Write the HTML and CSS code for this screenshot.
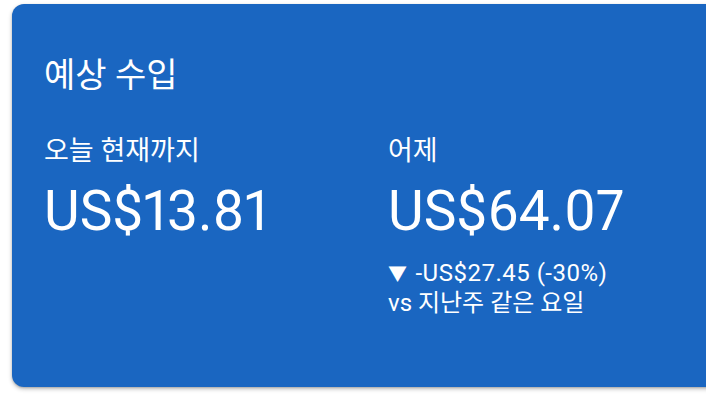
FILE: index.html
```html
<!DOCTYPE html>
<html lang="ko">
<head>
<meta charset="utf-8">
<link rel="stylesheet" href="styles.css">
</head>
<body>
<div class="card">
  <h1 class="title">예상 수입</h1>
  <div class="cols">
    <div class="col">
      <div class="label">오늘 현재까지</div>
      <div class="amount">US$13.81</div>
    </div>
    <div class="col">
      <div class="label">어제</div>
      <div class="amount">US$64.07</div>
      <div class="delta change"><span class="arrow">▼</span> -US$27.45 (-30%)</div>
      <div class="delta">vs 지난주 같은 요일</div>
    </div>
  </div>
</div>
</body>
</html>
```
FILE: styles.css
```css
html, body {
  margin: 0;
  padding: 0;
  background: #ffffff;
  overflow: hidden;
}
body {
  width: 706px;
  height: 408px;
  font-family: Roboto, "Noto Sans CJK KR", sans-serif;
  color: #ffffff;
}
.card {
  margin: 4px 0 0 12px;
  width: 740px;
  height: 383px;
  box-sizing: border-box;
  background: #1a66c1;
  border-radius: 12px;
  box-shadow: 0 2px 4px rgba(0,0,0,0.25), 0 1px 2px rgba(0,0,0,0.15);
  padding: 50px 0 0 32px;
}
.title {
  margin: 0;
  font-size: 34px;
  font-weight: 400;
  line-height: 42px;
}
.cols {
  display: flex;
  margin-top: 39px;
}
.col {
  width: 344px;
}
.label {
  font-size: 27px;
  line-height: 32px;
}
.amount {
  font-size: 55px;
  line-height: 62px;
  margin-top: 13px;
  font-variant-numeric: proportional-nums;
}
.delta {
  font-size: 24px;
  line-height: 29px;
}
.change {
  letter-spacing: 0.5px;
}
.amount + .delta {
  margin-top: 17px;
}
.arrow {
  font-size: 19px;
  margin-right: 2px;
  letter-spacing: 0;
}
```
